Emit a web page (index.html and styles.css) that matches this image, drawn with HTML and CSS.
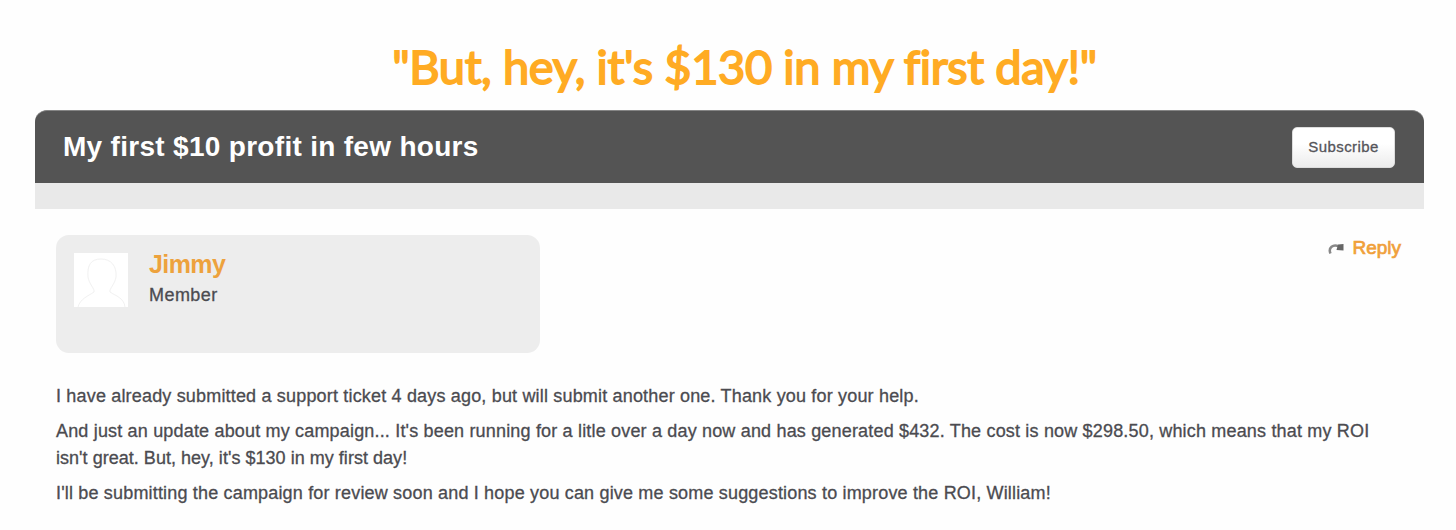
FILE: index.html
```html
<!DOCTYPE html>
<html lang="en">
<head>
  <meta charset="UTF-8" />
  <meta name="viewport" content="width=device-width, initial-scale=1.0"/>
  <title>My first $10 profit in few hours</title>
  <link rel="stylesheet" href="styles.css">
</head>
<body>
  <h1>"But, hey, it's $130 in my first day!"</h1>
  <div class="thread">
    <div class="thread-header">
      <h2>My first $10 profit in few hours</h2>
      <button class="subscribe">Subscribe</button>
    </div>
    <div class="thread-bar"></div>
    <div class="post">
      <div class="post-top">
        <div class="user">
          <svg class="avatar" viewBox="0 0 54 54">
            <path d="M4 54C6 46 14 43 20 39C21 36 15 31 14 24C13 12 17 6 27 6S43 13 42 24C41 31 35 36 36 39C42 43 50 45 51 54" />
          </svg>
          <div>
            <div class="name">Jimmy</div>
            <div class="role">Member</div>
          </div>
        </div>
        <a class="reply">
          <svg viewBox="0 0 16 14">
            <path class="arc" d="M2.500 12.500C0 7 5 2.500 11 5.500" />
            <path class="head" d="M10 3.500L15.500 3V9.500L8.500 9Z" />
          </svg>
          <span>Reply</span>
        </a>
      </div>
      <div class="text">
        <p>I have already submitted a support ticket 4 days ago, but will submit another one. Thank you for your help.</p>
        <p>And just an update about my campaign... It's been running for a litle over a day now and has generated $432. The cost is now $298.50, which means that my ROI<br><span class="short">isn't great. But, hey, it's $130 in my first day!</span></p>
        <p>I'll be submitting the campaign for review soon and I hope you can give me some suggestions to improve the ROI, William!</p>
      </div>
    </div>
  </div>
</body>
</html>
```
FILE: styles.css
```css
* { margin: 0; padding: 0; box-sizing: border-box; }
body {
  background: #fefefe;
  color: #4b4b50;
  font-family: 'Liberation Sans', Arial, sans-serif;
  height: 530px;
  overflow: hidden;
}
h1 {
  height: 110px;
  padding: 36px 0 0 33px;
  text-align: center;
  font-family: Lato, sans-serif;
  font-size: 47px;
  line-height: 60px;
  font-weight: 400;
  letter-spacing: -0.4px;
  color: #ffab23;
  -webkit-text-stroke: 1.8px #ffab23;
  white-space: nowrap;
}
.thread {
  width: 1389px;
  margin-left: 35px;
}
.thread-header {
  height: 73px;
  padding: 0 29px 0 28px;
  display: flex;
  align-items: center;
  justify-content: space-between;
  background: #545454;
  border-top: 1px solid #858585;
  border-radius: 12px 12px 0 0;
}
h2 {
  font-size: 28px;
  line-height: 32px;
  letter-spacing: 0.3px;
  color: #fff;
  white-space: nowrap;
}
.subscribe {
  width: 103px;
  height: 41px;
  padding-bottom: 2px;
  border: 1px solid #ddd;
  border-radius: 5px;
  background: linear-gradient(#fff 40%, #ececec);
  color: #55555a;
  font-family: inherit;
  font-size: 15px;
  letter-spacing: 0.4px;
  -webkit-text-stroke: 0.3px #55555a;
}
.thread-bar {
  height: 26px;
  background: #e9e9e9;
}
.post {
  padding: 26px 23px 0 21px;
}
.post-top {
  display: flex;
  justify-content: space-between;
  align-items: flex-start;
}
.user {
  width: 484px;
  height: 118px;
  padding: 18px;
  display: flex;
  gap: 21px;
  background: #ededed;
  border-radius: 13px;
}
.avatar {
  width: 54px;
  height: 54px;
  background: #fff;
}
.avatar path {
  fill: none;
  stroke: #f1f1f1;
  stroke-width: 1;
}
.name {
  margin-top: -4px;
  font-size: 25px;
  line-height: 30px;
  font-weight: bold;
  letter-spacing: -0.6px;
  color: #eda23d;
}
.role {
  margin-top: 5px;
  font-size: 18px;
  line-height: 22px;
  letter-spacing: 0.45px;
  -webkit-text-stroke: 0.3px #4b4b50;
}
.reply {
  margin-top: 1px;
  display: flex;
  align-items: center;
  gap: 8px;
  font-size: 19px;
  line-height: 24px;
  color: #f0a03a;
  -webkit-text-stroke: 0.7px #f0a03a;
}
.reply svg {
  width: 16px;
  height: 14px;
  -webkit-text-stroke: 0;
}
.arc {
  fill: none;
  stroke: #888;
  stroke-width: 2.5;
}
.head {
  fill: #666;
}
.text {
  margin-top: 30px;
  font-size: 18px;
  line-height: 27px;
  letter-spacing: 0.175px;
  white-space: nowrap;
  -webkit-text-stroke: 0.3px #4b4b50;
}
.text p {
  margin-bottom: 8px;
}
.short {
  letter-spacing: 0.03px;
}
```
